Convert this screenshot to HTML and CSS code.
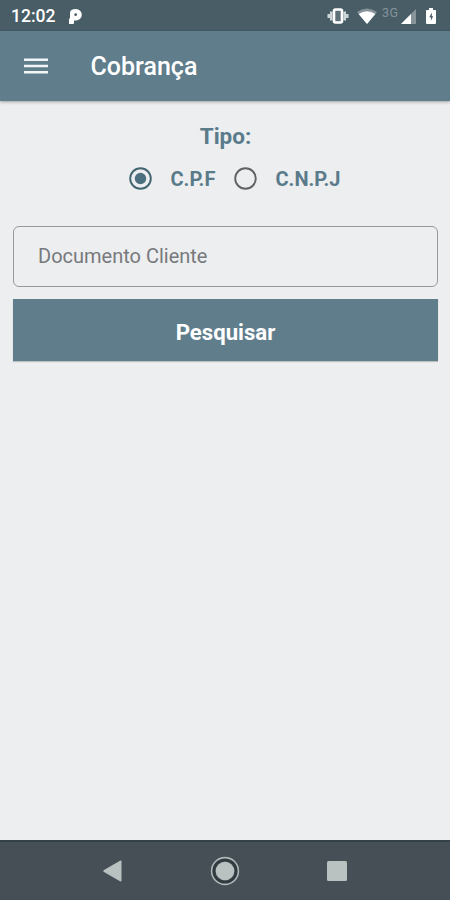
FILE: index.html
```html
<!DOCTYPE html>
<html lang="pt-BR">
<head>
<meta charset="utf-8">
<title>Cobrança</title>
<link rel="stylesheet" href="styles.css">
</head>
<body>
<div class="status">
  <span class="time">12:02</span>
  <svg class="pandora" width="13" height="15" viewBox="0 0 13 15"><path fill="#fff" fill-rule="evenodd" d="M1 4Q1 0 7 0a5.800 5.700 0 0 1 0 11.400H5V14q0 1-1 1H0V9.500h1zM6.600 4.200a1.400 1.400 0 1 0 .1 2.800 1.400 1.400 0 0 0-.1-2.800z"/></svg>
  <svg class="vibrate" width="22" height="16" viewBox="0 0 22 16"><rect x="7" y="1.500" width="8" height="13" rx="1.500" fill="#607078" stroke="#fff" stroke-width="2.600"/><path d="M4.300 3.500v9M17.700 3.500v9M1.800 6v4M20.200 6v4" stroke="#ccd4d8" stroke-width="2.600"/></svg>
  <svg class="wifi" width="20" height="16" viewBox="0 0 20 16"><path fill="#879399" d="M0 4Q10-3 20 4L10 16z"/><path fill="#fff" d="M1.600 6Q10 .5 18.400 6L10 16z"/></svg>
  <span class="network">3G</span>
  <svg class="signal" width="15" height="15" viewBox="0 0 15 15"><path fill="#87959b" d="M15 0v15H0z"/><path fill="#fff" d="M10 5v10H0z"/></svg>
  <svg class="battery" width="10" height="16" viewBox="0 0 10 16"><path fill="#fff" d="M3 0h4v2h2.200q.8 0 .8.800V15q0 1-1 1H1q-1 0-1-1V2.800Q0 2 .8 2H3z"/><path fill="#48595f" d="M5.800 4.500 3.300 9.300h1.600v3.500l2.300-4.500H5.800z"/></svg>
</div>
<header class="appbar">
  <svg width="24" height="16" viewBox="0 0 24 16"><path d="M0 1.700h24M0 8h24M0 14.300h24" stroke="#f2f6f7" stroke-width="2.500"/></svg>
  <h1 class="title">Cobrança</h1>
</header>
<main class="content">
  <h2 class="type">Tipo:</h2>
  <div class="options">
    <svg width="24" height="24" viewBox="0 0 24 24"><circle cx="11.500" cy="11.500" r="10.300" fill="none" stroke="#426570" stroke-width="1.900"/><circle cx="11.500" cy="11.500" r="5.700" fill="#4c7080"/></svg>
    <span class="label cpf">C.P.F</span>
    <svg width="24" height="24" viewBox="0 0 24 24"><circle cx="11.500" cy="11.500" r="10.300" fill="none" stroke="#626266" stroke-width="1.900"/></svg>
    <span class="label">C.N.P.J</span>
  </div>
  <input class="document" type="text" placeholder="Documento Cliente">
  <button class="search">Pesquisar</button>
</main>
<nav class="navbar">
  <svg width="19" height="22" viewBox="0 0 19 22"><path fill="#b9c1c1" d="M17 .8q1.500-.6 1.500.8v18.800q0 1.400-1.500.8L1 12q-1.500-1 0-2z"/></svg>
  <svg width="30" height="30" viewBox="0 0 30 30"><circle cx="15" cy="15" r="11.500" fill="none" stroke="#303b40" stroke-width="3"/><circle cx="15" cy="15" r="13.400" fill="none" stroke="#aeb7b8" stroke-width="1.600"/><circle cx="15" cy="15" r="9.300" fill="#b9c1c1"/></svg>
  <svg width="20" height="20" viewBox="0 0 20 20"><rect width="20" height="20" rx="1.500" fill="#b9c1c1"/></svg>
</nav>
</body>
</html>
```

FILE: styles.css
```css
* { box-sizing: border-box; }
body {
  margin: 0;
  height: 900px;
  display: flex;
  flex-direction: column;
  background: #edeef0;
  font-family: Roboto, "Liberation Sans", sans-serif;
  overflow: hidden;
}
svg { display: block; flex: none; }
.status {
  height: 31px;
  flex: none;
  display: flex;
  align-items: center;
  padding: 1px 14px 0 11px;
  background: #495d67;
  color: #fff;
}
.time { width: 58px; font-size: 17.5px; font-weight: 500; }
.vibrate { margin-left: auto; }
.wifi { margin-left: 8px; }
.network { margin-left: 5px; width: 18px; font-size: 12.5px; line-height: 12px; color: #84939a; align-self: flex-start; margin-top: 6px; letter-spacing: .5px; }
.signal { margin-left: 1px; }
.battery { margin-left: 10px; }
.appbar {
  height: 69.500px;
  flex: none;
  display: flex;
  align-items: center;
  gap: 43px;
  padding: 0 23.500px;
  background: #607d8c;
  box-shadow: 0 1px 3px #0005;
  color: #fff;
}
.title { margin: 2px 0 0; font-size: 25px; font-weight: 500; line-height: 30px; }
.content {
  flex: 1;
  display: flex;
  flex-direction: column;
  padding: 20.500px 12px 0 13px;
}
.type { margin: 0; text-align: center; color: #5a7b8a; font-size: 22.5px; font-weight: 700; line-height: 30px; }
.options { display: flex; align-items: center; height: 24px; margin: 16px 0 35px 115.500px; }
.label { margin-left: 18px; color: #5a7b8a; font-size: 20px; font-weight: 700; }
.cpf { width: 63px; }
.document {
  width: 100%;
  height: 61px;
  border: 1px solid #97999c;
  border-radius: 6px;
  background: transparent;
  padding: 0 24px 1px;
  font: 400 20px Roboto, sans-serif;
  color: #555;
  outline: 0;
}
.document::placeholder { color: #77797c; opacity: 1; }
.search {
  margin-top: 12px;
  height: 62px;
  border: 0;
  background: #607d8c;
  box-shadow: 0 1px 1px #0003;
  color: #fff;
  padding: 3px 0 0;
  font: 700 22.2px Roboto, sans-serif;
}
.navbar {
  height: 60px;
  flex: none;
  display: flex;
  align-items: center;
  justify-content: space-between;
  padding: 0 103px 1px;
  border-top: 2px solid #344148;
  background: #464f55;
}
```
